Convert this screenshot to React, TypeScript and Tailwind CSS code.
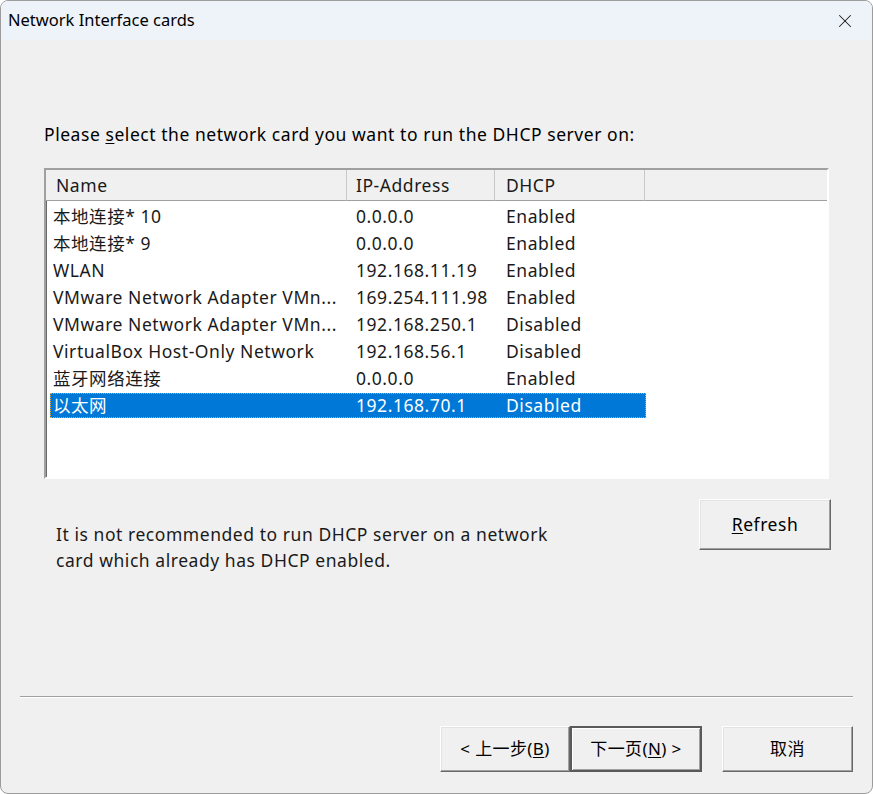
import { X } from "lucide-react";

interface Adapter {
  name: string;
  ip: string;
  dhcp: string;
}

const adapters: Adapter[] = [
  { name: "本地连接* 10", ip: "0.0.0.0", dhcp: "Enabled" },
  { name: "本地连接* 9", ip: "0.0.0.0", dhcp: "Enabled" },
  { name: "WLAN", ip: "192.168.11.19", dhcp: "Enabled" },
  { name: "VMware Network Adapter VMn...", ip: "169.254.111.98", dhcp: "Enabled" },
  { name: "VMware Network Adapter VMn...", ip: "192.168.250.1", dhcp: "Disabled" },
  { name: "VirtualBox Host-Only Network", ip: "192.168.56.1", dhcp: "Disabled" },
  { name: "蓝牙网络连接", ip: "0.0.0.0", dhcp: "Enabled" },
  { name: "以太网", ip: "192.168.70.1", dhcp: "Disabled" },
];

const font = {
  fontFamily: '"Noto Sans", "Noto Sans CJK SC", sans-serif',
};

// classic raised 3D push button
const raised =
  "border border-t-white border-l-white border-r-[#696969] border-b-[#696969] shadow-[inset_-1px_-1px_0_#a0a0a0,inset_1px_1px_0_#e3e3e3] bg-[#f0f0f0]";

const App = () => {
  const selected = 7;

  return (
    <div
      className="w-[873px] h-[794px] rounded-[8px] border border-[#9c9c9c] bg-[#f0f0f0] flex flex-col overflow-hidden text-black"
      style={font}
    >
      {/* title bar */}
      <div className="h-[39px] bg-[#eef3f9] flex items-center justify-between pl-[7px] pr-[16px] shrink-0">
        <span className="text-[16.5px]">Network Interface cards</span>
        <X className="w-[22px] h-[22px] text-[#1a1a1a]" strokeWidth={1.1} />
      </div>

      <div className="flex-1 flex flex-col pl-[43px] pr-[44px] text-[17.5px] tracking-[0.55px]">
        <p className="mt-[83px] leading-[22px]">
          Please <span className="underline underline-offset-2">s</span>elect the network card you want to run
          the DHCP server on:
        </p>

        {/* adapter list */}
        <div className="mt-[23px] h-[311px] w-[785px] border-2 border-t-[#a0a0a0] border-l-[#a0a0a0] border-r-white border-b-white bg-white shadow-[inset_1px_1px_0_#696969]">
          <div className="flex h-[31px] bg-[#f0f0f0] text-[#1a1a1a]">
            <div className="w-[301px] pl-[10px] flex items-center border-r border-[#c8c8c8] border-b border-b-[#a0a0a0]">
              Name
            </div>
            <div className="w-[148px] pl-[9px] flex items-center border-r border-[#c8c8c8] border-b border-b-[#a0a0a0]">
              IP-Address
            </div>
            <div className="w-[150px] pl-[11px] flex items-center border-r border-[#c8c8c8] border-b border-b-[#a0a0a0]">
              DHCP
            </div>
            <div className="flex-1 border-b border-b-[#a0a0a0]"></div>
          </div>

          <div className="pt-[2px] pl-[4px]">
            {adapters.map((a, i) => (
              <div key={i} className="h-[27px] flex items-center">
                <div
                  className={
                    i === selected
                      ? "h-[25px] w-[596px] flex items-center bg-[#0078d7] text-white outline-1 outline-dotted outline-[#e8a13c] -outline-offset-1"
                      : "h-[25px] w-[596px] flex items-center text-[#1a1a1a]"
                  }
                >
                  <span className="w-[297px] pl-[3px] whitespace-nowrap">{a.name}</span>
                  <span className="w-[150px] pl-[9px]">{a.ip}</span>
                  <span className="pl-[9px]">{a.dhcp}</span>
                </div>
              </div>
            ))}
          </div>
        </div>

        <div className="flex justify-between mt-[20px]">
          <p className="mt-[22px] ml-[12px] leading-[26px] text-[#1a1a1a] whitespace-nowrap">
            It is not recommended to run DHCP server on a network
            <br />
            card which already has DHCP enabled.
          </p>
          <button className={`w-[132px] h-[51px] mr-[-3px] ${raised}`}>
            <span className="underline underline-offset-2">R</span>efresh
          </button>
        </div>
      </div>

      {/* footer */}
      <div className="mx-[19px] h-[2px] border-t border-t-[#a0a0a0] border-b border-b-white"></div>
      <div className="flex justify-end items-start pr-[19px] pt-[28px] pb-[21px] text-[17px] tracking-[0.4px]">
        <button className={`w-[130px] h-[46px] ${raised}`}>
          &lt; 上一步(<span className="underline underline-offset-2">B</span>)
        </button>
        <button className="w-[132px] h-[46px] border-2 border-[#5a5a5a] bg-[#f0f0f0] shadow-[inset_1px_1px_0_white,inset_-1px_-1px_0_#a0a0a0]">
          下一页(<span className="underline underline-offset-2">N</span>) &gt;
        </button>
        <button className={`w-[131px] h-[46px] ml-[20px] ${raised}`}>取消</button>
      </div>
    </div>
  );
};

export default App;
